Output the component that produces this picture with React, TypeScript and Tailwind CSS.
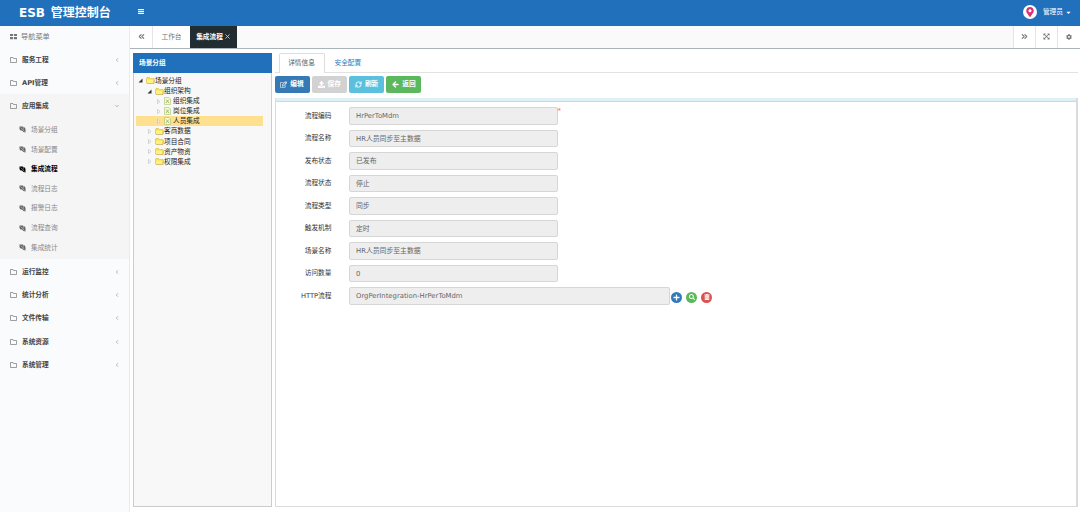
import { FaArrowLeft, FaCaretDown, FaCog, FaExpandArrowsAlt, FaMapMarkerAlt, FaPlus, FaRegEdit, FaSearch, FaTrashAlt, FaUpload } from 'react-icons/fa'
import { ChevronDown, ChevronLeft, ChevronsLeft, ChevronsRight, RefreshCw, X } from 'lucide-react'

const topMenus = ['服务工程', 'API管理']
const subMenus = ['场景分组', '场景配置', '集成流程', '流程日志', '报警日志', '流程查询', '集成统计']
const bottomMenus = ['运行监控', '统计分析', '文件传输', '系统资源', '系统管理']

const fields = [
  { label: '流程编码', value: 'HrPerToMdm', required: true },
  { label: '流程名称', value: 'HR人员同步至主数据' },
  { label: '发布状态', value: '已发布' },
  { label: '流程状态', value: '停止' },
  { label: '流程类型', value: '同步' },
  { label: '触发机制', value: '定时' },
  { label: '场景名称', value: 'HR人员同步至主数据' },
  { label: '访问数量', value: '0' },
]

function LeafIcon() {
  return (
    <svg viewBox="0 0 14 14" className="w-[7px] h-[7px] shrink-0" fill="currentColor">
      <path d="M1 1h7l1 2h3l1 4v6l-4-1-3-3H3L1 6z" />
      <path d="M3 3l8 8M8 3l1 4" stroke="#f5f5f5" strokeWidth="0.8" />
    </svg>
  )
}

function FolderOutline() {
  return (
    <svg viewBox="0 0 14 12" className="mr-[5px] h-[6px] w-[7px] shrink-0" fill="none" stroke="#777" strokeWidth="1.4">
      <path d="M1 11V1h5l1 2h6v8z" />
    </svg>
  )
}

function FolderIcon() {
  return (
    <svg viewBox="0 0 18 14" className="w-[9px] h-[7px] shrink-0">
      <path d="M1 12V2l1-1h5l2 2h7v9z" fill="#f7e04b" stroke="#d0ac3c" />
      <path d="M2 12V5h13v7z" fill="#fff27a" />
      <path d="M2 13h14l1-8" fill="none" stroke="#b8962f" />
    </svg>
  )
}

function FileIcon() {
  return (
    <svg viewBox="0 0 14 16" className="w-[7px] h-2 shrink-0">
      <path d="M1 1h9l3 3v11H1z" fill="#f6fad2" stroke="#9bb650" />
      <path d="M4 5l3 3 3-3M4 12l3-4 3 4" fill="none" stroke="#84ab55" strokeWidth="1.5" />
    </svg>
  )
}

function Arrow({ open }: { open?: boolean }) {
  return (
    <svg viewBox="0 0 10 10" className="w-[5px] h-[5px] shrink-0">
      {open ? <path d="M9 1v8H1z" fill="#333" /> : <path d="M3 1l5 4-5 4z" fill="#fff" stroke="#aaa" />}
    </svg>
  )
}

function MenuItem({ text, open }: { text: string; open?: boolean }) {
  return (
    <div className="flex h-[23.2px] items-center pl-[10px] pr-[9px] pt-[1px] font-bold text-[#444]">
      <FolderOutline />
      <span className="flex-1">{text}</span>
      {open ? <ChevronDown className="w-[6px] h-[6px] text-[#777]" /> : <ChevronLeft className="w-[6px] h-[6px] text-[#777]" />}
    </div>
  )
}

function Sidebar() {
  return (
    <aside className="w-[130px] shrink-0 border-r border-[#e9ebec] bg-[#f9fbfd]">
      <div className="flex h-[21.5px] items-center pl-[10px] text-[7.2px] text-[#777]">
        <svg viewBox="0 0 16 14" className="w-[7px] h-[7px] mr-[4px]" fill="#777">
          <path d="M0 1h7v5H0zM9 1h7v5H9zM0 8h7v5H0zM9 8h7v5H9z" />
        </svg>
        导航菜单
      </div>
      {topMenus.map((text) => <MenuItem key={text} text={text} />)}
      <div className="h-[165.5px] bg-[#f5f5f5]">
        <MenuItem text="应用集成" open />
        <div className="pt-[3px]">
          {subMenus.map((text) => (
            <div key={text} className={`flex h-[19.65px] items-center gap-[5px] pl-[19px] ${text === '集成流程' ? 'font-bold text-black' : 'text-[#888]'}`}>
              <span className={text === '集成流程' ? 'text-black' : 'text-[#666]'}><LeafIcon /></span>
              {text}
            </div>
          ))}
        </div>
      </div>
      <div className="pt-[0.5px]">
        {bottomMenus.map((text) => <MenuItem key={text} text={text} />)}
      </div>
    </aside>
  )
}

function TreeRow({ text, level, open, file, active }: { text: string; level: number; open?: boolean; file?: boolean; active?: boolean }) {
  const indent = ['pl-0', 'pl-[9px]', 'pl-[18px]'][level]
  return (
    <div className={active ? 'bg-[#ffe08e]' : ''}>
      <div className={`flex h-[10.1px] items-center text-[#222] ${indent}`}>
        <span className="ml-[2px] mr-[2.5px]"><Arrow open={open} /></span>
        {file ? <FileIcon /> : <FolderIcon />}
        <span className={file ? 'ml-[2.5px]' : 'ml-[0.5px]'}>{text}</span>
      </div>
    </div>
  )
}

function TreePanel() {
  return (
    <section className="flex w-[139px] flex-col border border-[#ccc] border-t-0 bg-[#f8f8f8]">
      <div className="-mx-px flex h-[20px] items-center bg-[#2170bb] pl-[6px] font-bold text-white">场景分组</div>
      <div className="pl-[2px] pr-[8px] pt-[3.4px]">
        <TreeRow text="场景分组" level={0} open />
        <TreeRow text="组织架构" level={1} open />
        <TreeRow text="组织集成" level={2} file />
        <TreeRow text="岗位集成" level={2} file />
        <TreeRow text="人员集成" level={2} file active />
        <TreeRow text="客商数据" level={1} />
        <TreeRow text="项目合同" level={1} />
        <TreeRow text="资产物资" level={1} />
        <TreeRow text="权限集成" level={1} />
      </div>
    </section>
  )
}

function Toolbar() {
  const button = 'flex h-[17px] w-[35px] items-center justify-center gap-[3px] rounded-[2px] font-bold text-white'
  return (
    <div className="mt-[3px] flex gap-[2.3px]">
      <button className={`${button} bg-[#357ab5]`}><FaRegEdit className="size-[7px]" />编辑</button>
      <button className={`${button} bg-[#d2d2d2]`}><FaUpload className="size-[7px]" />保存</button>
      <button className={`${button} bg-[#5bc0de]`}><RefreshCw className="size-[7px]" strokeWidth={3} />刷新</button>
      <button className={`${button} bg-[#5cb85c]`}><FaArrowLeft className="size-[7px]" stroke="white" strokeWidth={30} />返回</button>
    </div>
  )
}

function DetailPanel() {
  const input = 'flex h-[17.5px] items-center rounded-[2px] border border-[#d6d6d6] bg-[#eee] pl-[6.5px] pt-[1px] text-[6.85px] text-[#666]'
  const action = 'flex size-[11px] items-center justify-center rounded-full text-white'
  return (
    <section className="flex flex-1 flex-col">
      <div className="flex h-[20px] border-b border-[#e2e2e2]">
        <div className="ml-[4px] -mb-px flex w-[46px] items-center justify-center rounded-t-[2px] border border-b-0 border-[#ddd] bg-white text-[#555]">详情信息</div>
        <div className="ml-[10px] flex items-center pt-[1px] text-[#337ab7]">安全配置</div>
      </div>
      <Toolbar />
      <div className="mt-[5px] flex-1 border border-[#d9dbdd] border-r-2 border-t-0">
        <div className="h-[4px] border-b border-[#c2dce6] bg-[#dfeff6]" />
        <div className="flex flex-col gap-[5px] pt-[5.5px]">
          {fields.map((field) => (
            <div key={field.label} className="flex">
              <label className="w-[56px] pt-[3.5px] text-right text-[#333]">{field.label}</label>
              <div className={`${input} ml-[17px] w-[209px]`}>{field.value}</div>
              {field.required && <span className="h-2 text-[7px] leading-[9px] text-red-400">*</span>}
            </div>
          ))}
          <div className="flex">
            <label className="w-[56px] pt-[3.5px] text-right text-[#333]">HTTP流程</label>
            <div className={`${input} ml-[17px] w-[321px]`}>OrgPerIntegration-HrPerToMdm</div>
            <div className="mt-[4.5px] ml-[1.5px] flex gap-[4px]">
              <span className={`${action} bg-[#337ab7]`}><FaPlus className="size-[7px]" /></span>
              <span className={`${action} bg-[#5cb85c]`}><FaSearch className="size-[6px]" /></span>
              <span className={`${action} bg-[#d9534f]`}><FaTrashAlt className="size-[6px]" /></span>
            </div>
          </div>
        </div>
      </div>
    </section>
  )
}

export default function App() {
  return (
    <div className="flex h-[512px] w-[1080px] flex-col overflow-hidden bg-white font-['DejaVu_Sans','Noto_Sans_CJK_SC',sans-serif] text-[6.7px] leading-[10px]">
      <header className="flex h-[26px] shrink-0 items-center bg-[#2170bb] text-white">
        <h1 className="w-[138px] pl-[19px] text-[12px] leading-[16px] font-bold whitespace-nowrap [word-spacing:1.5px]">ESB 管理控制台</h1>
        <svg viewBox="0 0 12 10" className="mb-[3px] h-[5px] w-[6px]" fill="currentColor">
          <path d="M0 0h12v2.5H0zM0 4h12v2.5H0zM0 8h12v2H0z" />
        </svg>
        <div className="ml-auto mb-[2px] flex items-center pr-[8px]">
          <span className="flex size-[14px] items-center justify-center rounded-full bg-white">
            <FaMapMarkerAlt className="size-[10px] text-[#dc2f74]" />
          </span>
          <span className="ml-[6px] mr-[2px]">管理员</span>
          <FaCaretDown className="size-[7px]" />
        </div>
      </header>
      <div className="flex flex-1">
        <Sidebar />
        <div className="flex flex-1 flex-col">
          <nav className="flex h-[22.5px] border-b border-[#aab5bb] bg-[#fafafa] text-[#777]">
            <div className="flex w-[23px] items-center justify-center border-r border-[#e5e5e5] bg-white"><ChevronsLeft className="size-[9px]" strokeWidth={3} /></div>
            <div className="flex w-[37px] items-center justify-center bg-white">工作台</div>
            <div className="flex w-[47px] items-center justify-center gap-px bg-[#222d32] font-bold text-white">集成流程<X className="size-[7px] text-[#ccc]" strokeWidth={3} /></div>
            <div className="ml-auto flex w-[22px] items-center justify-center border-l border-[#e5e5e5] bg-white"><ChevronsRight className="size-[9px]" strokeWidth={3} /></div>
            <div className="flex w-[22px] items-center justify-center border-l border-[#e5e5e5] bg-white"><FaExpandArrowsAlt className="size-[7px]" /></div>
            <div className="flex w-[23px] items-center justify-center border-l border-[#e5e5e5] bg-white"><FaCog className="size-[6px]" /></div>
          </nav>
          <main className="flex flex-1 gap-[2.5px] pt-[4px] pr-[2px] pb-[5px] pl-[3px]">
            <TreePanel />
            <DetailPanel />
          </main>
        </div>
      </div>
    </div>
  )
}
